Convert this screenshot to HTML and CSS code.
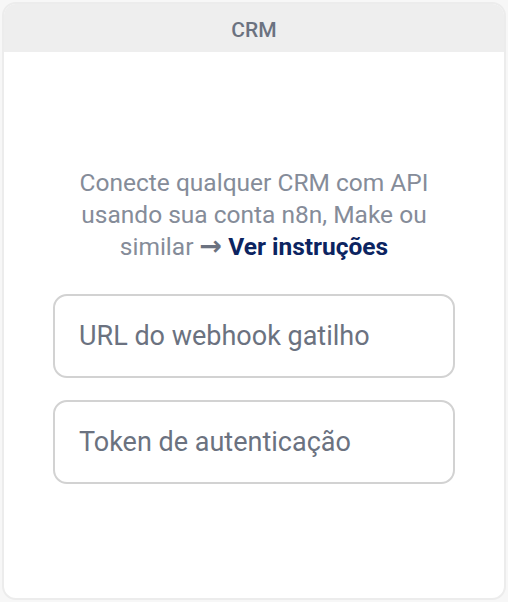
FILE: index.html
```html
<!DOCTYPE html>
<html lang="pt">
<head>
    <meta charset="UTF-8">
    <meta name="viewport" content="width=device-width, initial-scale=1.0">
    <title>CRM</title>
    <link rel="stylesheet" href="styles.css">
</head>
<body>
    <div class="card">
        <div class="card-header">CRM</div>
        <div class="card-body">
            <p class="intro">
                Conecte qualquer CRM com API<br>
                usando sua conta n8n, Make ou<br>
                similar <span class="arrow">&rarr;</span> <a href="#">Ver instruções</a>
            </p>
            <input type="text" class="field" placeholder="URL do webhook gatilho">
            <input type="text" class="field" placeholder="Token de autenticação">
        </div>
    </div>
</body>
</html>
```

FILE: styles.css
```css
body {
    margin: 0;
    padding: 2px;
    background: #f7f7f7;
    font-family: Roboto, "Liberation Sans", sans-serif;
}

.card {
    height: 594px;
    border: 2px solid #ececec;
    border-radius: 14px;
    background: white;
    overflow: hidden;
    display: flex;
    flex-direction: column;
}

.card-header {
    background: #eeeeee;
    height: 48px;
    line-height: 52px;
    text-align: center;
    color: #6b7280;
    font-size: 21px;
    font-weight: 500;
}

.card-body {
    flex: 1;
    display: flex;
    flex-direction: column;
    align-items: center;
    justify-content: center;
    gap: 22px;
    padding-top: 1px;
}

.intro {
    margin: 0 0 9px;
    text-align: center;
    color: #858c99;
    font-size: 24.5px;
    line-height: 32px;
}

.intro .arrow {
    font-family: "DejaVu Sans", sans-serif;
    font-weight: 700;
    font-size: 27px;
    line-height: 20px;
    color: #6b7280;
}

.intro a {
    color: #0c2461;
    font-weight: 700;
    text-decoration: none;
}

.field {
    box-sizing: border-box;
    width: 402px;
    height: 84px;
    border: 2px solid #d2d2d2;
    border-radius: 14px;
    padding: 0 24px;
    font-family: inherit;
    font-size: 27px;
    outline: none;
}

.field::placeholder {
    color: #6b7280;
}
```
